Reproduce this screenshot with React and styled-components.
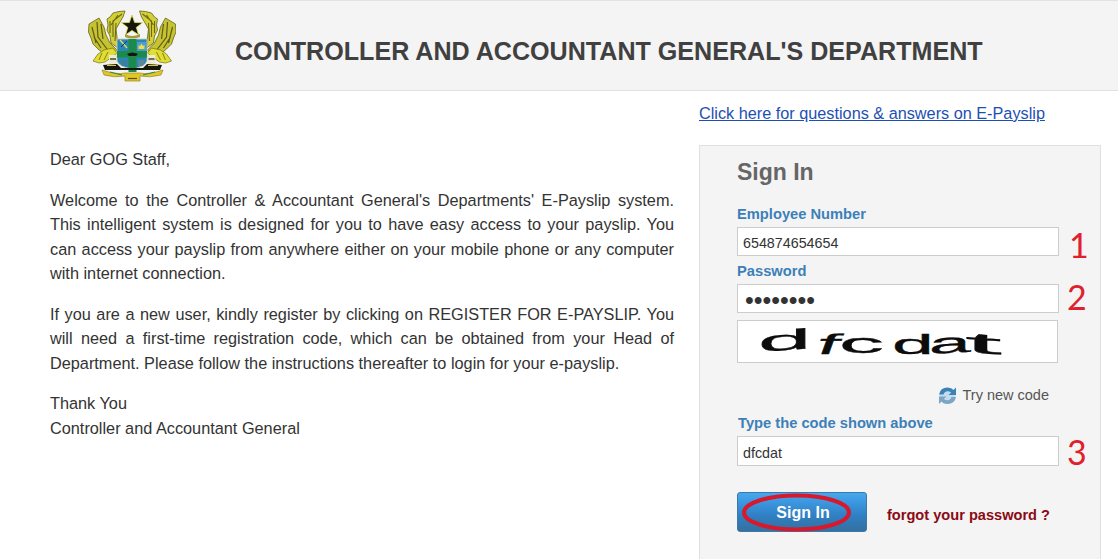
import React from 'react'
import styled, { createGlobalStyle } from 'styled-components'

const Global = createGlobalStyle`
  html, body { margin: 0; padding: 0; background: #fff; height: 559px; overflow: hidden; }
  body { font-family: "Liberation Sans", Arial, sans-serif; color: #333; }
  * { box-sizing: border-box; }
`;

const Page = styled.div`
  width: 1118px;
  height: 559px;
  overflow: hidden;
`;

const Header = styled.header`
  height: 91px;
  background: #f4f4f4;
  border-top: 1px solid #e2e2e2;
  border-bottom: 1px solid #e0e0e0;
  display: flex;
  align-items: center;
  padding-left: 88px;
`;

const Crest = styled.svg`
  width: 88px;
  height: 72px;
  flex: none;
`;

const HeaderTitle = styled.h1`
  margin: 12px 0 0 59px;
  font-size: 25.1px;
  font-weight: bold;
  color: #404040;
  white-space: nowrap;
`;

const Main = styled.main`
  display: flex;
  padding-left: 50px;
`;

const Letter = styled.section`
  width: 624px;
  padding-top: 56px;
  font-size: 16.3px;
  line-height: 24.5px;
  text-align: justify;
`;

const Para = styled.p`
  margin: 0 0 16px;
`;

const Side = styled.aside`
  margin-left: 25px;
  width: 402px;
  display: flex;
  flex-direction: column;
`;

const TopLink = styled.a`
  margin-top: 13px;
  height: 41px;
  font-size: 16.25px;
  line-height: 18px;
  color: #1d4fb3;
  text-decoration: underline;
`;

const Panel = styled.div`
  height: 420px;
  background: #f4f4f4;
  border: 1px solid #e0e0e0;
  padding: 0 0 0 37px;
`;

const PanelTitle = styled.h2`
  margin: 13px 0 21px;
  font-size: 23px;
  line-height: 26px;
  font-weight: bold;
  color: #666;
`;

const Label = styled.label`
  display: block;
  margin-left: ${(p) => p.$shift || 0}px;
  font-size: 14.7px;
  line-height: 16px;
  font-weight: bold;
  color: #3c80b8;
`;

const Row = styled.div`
  display: flex;
  align-items: center;
  margin-top: ${(p) => p.$top || 0}px;
  margin-bottom: ${(p) => p.$bottom || 0}px;
`;

const Field = styled.input`
  width: 322px;
  height: ${(p) => p.$height || 29}px;
  border: 1px solid #ccc;
  background: #fff;
  padding: ${(p) => p.$padTop ?? 3}px 5px 0 ${(p) => p.$padLeft || 5}px;
  font-family: "Liberation Sans", Arial, sans-serif;
  font-size: ${(p) => p.$size || 14.3}px;
  color: #333;
  outline: none;
`;

const Mark = styled.span`
  margin-left: ${(p) => p.$gap || 8}px;
  transform: translateY(${(p) => p.$drop || 0}px);
  font-family: Lato, "Open Sans", sans-serif;
  font-size: 34px;
  line-height: 29px;
  color: #e0202c;
`;

const Captcha = styled.div`
  width: 321px;
  height: 43px;
  margin-top: 7px;
  background: #fff;
  border: 1px solid #ccc;
  display: flex;
  align-items: baseline;
  padding: 0 0 0 20px;
  overflow: hidden;
`;

const CaptchaChar = styled.span`
  display: block;
  flex: none;
  width: ${(p) => p.$w}px;
  font-family: "Liberation Sans", Arial, sans-serif;
  font-size: 30px;
  line-height: 36px;
  color: #0c0c0c;
  -webkit-text-stroke: 0.3px #0c0c0c;
  transform-origin: left 75%;
  transform: ${(p) => p.$warp};
`;

const Refresh = styled.div`
  display: flex;
  align-items: center;
  justify-content: flex-end;
  width: 312px;
  height: 20px;
  margin-top: 22px;
  margin-bottom: 10px;
  font-size: 14.5px;
  color: #555;
  gap: 6px;
`;

const Actions = styled.div`
  display: flex;
  align-items: center;
  margin-top: 26px;
`;

const ButtonWrap = styled.div`
  position: relative;
  width: 130px;
  height: 40px;
`;

const SignInButton = styled.button`
  width: 130px;
  height: 40px;
  padding: 2px 0 0 2px;
  border: 1px solid #3f77a6;
  border-radius: 3px;
  background: linear-gradient(#45a8f0, #2f7fc4 60%, #34719f);
  color: #fff;
  font-family: "Liberation Sans", Arial, sans-serif;
  font-size: 16px;
  font-weight: bold;
`;

const Ring = styled.svg`
  position: absolute;
  left: 0;
  top: 0;
  width: 120px;
  height: 40px;
  pointer-events: none;
`;

const Forgot = styled.a`
  margin: 6px 0 0 20px;
  font-size: 14.6px;
  font-weight: bold;
  color: #8b0a14;
  text-decoration: none;
`;

const LeftEagle = () => (
  <g>
    <path d="M125 10 L119 10.5 L113 12 L110 16 L107 18 L108 24 L107 29 L110 35 L111 42 L118 47 L117 36 L116 28 L120 21 L123 16Z" fill="#d2cf38" stroke="#66621a" strokeWidth="0.8" />
    <path d="M122 13 L113 20 L113 36 M118 14 L111 24 M116 22 L115 40 M110 20 L110 32" stroke="#6c6818" strokeWidth="1.1" fill="none" />
    <path d="M99 17 L94 20 L89 23 L88.5 31 L91 37 L93 43 L98 48 L104 53 L112 55 L117 49 L110 42 L106 34 L104 26Z" fill="#c6c332" stroke="#66621a" strokeWidth="0.8" />
    <path d="M97 21 L98 36 L107 48 M92 26 L96 42 M101 23 L103 38 M94 36 L101 47" stroke="#5e5a14" strokeWidth="1.2" fill="none" />
    <path d="M113 47 L104 49 L98 53 L93 60 L99 62 L105 61 L112 56 L117 52Z" fill="#e1dd30" stroke="#76701a" strokeWidth="0.7" />
    <path d="M102 52 L99 59 M108 51 L104 59" stroke="#7c7716" strokeWidth="0.9" />
    <rect x="109" y="54" width="8" height="11" fill="#ecebd8" />
    <path d="M110 58 H116" stroke="#3a3a22" strokeWidth="1.4" />
  </g>
)

const CrestIcon = () => (
  <Crest viewBox="88 9 88 72">
    <defs>
      <filter id="soft" x="-5%" y="-5%" width="110%" height="110%">
        <feGaussianBlur stdDeviation="0.35" />
      </filter>
    </defs>
    <g filter="url(#soft)">
      <LeftEagle />
      <g transform="translate(264.5 0) scale(-1 1)">
        <LeftEagle />
      </g>
      <path d="M132 14 L134.6 21.5 L142.5 21.7 L136.3 26.4 L138.6 33.8 L132 29.4 L125.6 33.8 L127.8 26.4 L121.5 21.7 L129.4 21.5Z" fill="#15150e" stroke="#e0dc50" strokeWidth="0.8" />
      <path d="M125 33 Q132 37 140 33 L140 36 Q132 39 125 36Z" fill="#a89a3a" />
      <path d="M117 38 H147 V60 Q145 66 132 68 Q119 66 117 60Z" fill="#2c86b4" stroke="#c6ceb8" strokeWidth="0.9" />
      <path d="M120 39 L127 47" stroke="#dbe060" strokeWidth="1.3" />
      <path d="M121 46 L127 40" stroke="#1a3a50" strokeWidth="1" />
      <path d="M137 41 H146 V50 H137Z" fill="#4d9ccb" />
      <path d="M138.5 48 V44 L140 45 L141.5 42.5 L143 45 L144.5 44 V48Z" fill="#eedd50" />
      <path d="M128.5 38 H136.5 V50 H147 V56.5 H136.5 V71 H128.5 V56.5 H117 V50 H128.5Z" fill="#1c8a4c" />
      <path d="M127 53 Q132 50 138 53 L136 55 H129Z" fill="#151510" />
      <path d="M120 59 H127 V65 H122Z" fill="#3d7f9a" />
      <path d="M138 59 H145 L143 65 H138Z" fill="#5a8896" />
      <path d="M103 64 L117 63 L121 67 H143 L147 63 L162 64 L160 69 L105 69Z" fill="#17170f" />
      <path d="M107 64.5 H116 M148 64.5 H158" stroke="#d9c935" strokeWidth="1.2" />
      <path d="M102 69 Q117 74 125 72 H140 Q148 74 163 69 L161 74 Q150 77 140 75 L140 80 H125 L125 75 Q114 77 104 74Z" fill="#dfc72a" stroke="#8a7812" strokeWidth="0.6" />
      <path d="M110 71 L122 74 M143 74 L155 71" stroke="#2a8a4a" strokeWidth="1" />
      <path d="M128 77.5 H137" stroke="#5e5010" strokeWidth="1.2" />
    </g>
  </Crest>
)

const RefreshIcon = () => (
  <svg width="19" height="19" viewBox="0 0 19 19">
    <rect x="1.5" y="2" width="16" height="15.5" rx="6" fill="#c6dcec" />
    <path d="M1 8.5 Q2.5 1.5 9.5 1.5 Q13.5 1.5 15.5 4 L18 1.5 V9 H10.5 L13.2 6.6 Q11.5 5.2 9.5 5.2 Q6.8 5.2 5.5 8.5Z" fill="#3a83b6" />
    <path d="M18 11 Q16.5 18 9.5 18 Q5.5 18 3.5 15.5 L1 18 V10.5 H8.5 L5.8 13 Q7.5 14.3 9.5 14.3 Q12.2 14.3 13.5 11Z" fill="#7ba6c6" />
  </svg>
)

export default function App() {
  return (
    <Page>
      <Global />
      <Header>
        <CrestIcon />
        <HeaderTitle>CONTROLLER AND ACCOUNTANT GENERAL'S DEPARTMENT</HeaderTitle>
      </Header>
      <Main>
        <Letter>
          <Para>Dear GOG Staff,</Para>
          <Para>
            Welcome to the Controller &amp; Accountant General's Departments' E-Payslip system. This intelligent
            system is designed for you to have easy access to your payslip. You can access your payslip from
            anywhere either on your mobile phone or any computer with internet connection.
          </Para>
          <Para>
            If you are a new user, kindly register by clicking on REGISTER FOR E-PAYSLIP. You will need a
            first-time registration code, which can be obtained from your Head of Department. Please follow the
            instructions thereafter to login for your e-payslip.
          </Para>
          <Para>
            Thank You
            <br />
            Controller and Accountant General
          </Para>
        </Letter>
        <Side>
          <TopLink href="#">Click here for questions &amp; answers on E-Payslip</TopLink>
          <Panel>
            <PanelTitle>Sign In</PanelTitle>
            <Label>Employee Number</Label>
            <Row $top={5} $bottom={7}>
              <Field readOnly value="654874654654" />
              <Mark $gap={10} $drop={3}>1</Mark>
            </Row>
            <Label>Password</Label>
            <Row $top={5}>
              <Field readOnly type="password" value="12345678" $size={25} $padLeft={7} $padTop={4} />
              <Mark $drop={-2}>2</Mark>
            </Row>
            <Captcha>
              <CaptchaChar $w={57} $warp="translateY(3px) skewY(-4deg) scale(3.2, 0.95)">d</CaptchaChar>
              <CaptchaChar $w={24} $warp="translateY(5px) skewX(-20deg) scale(2.6, 0.95)">f</CaptchaChar>
              <CaptchaChar $w={53} $warp="translateY(4px) scale(3, 0.95)">c</CaptchaChar>
              <CaptchaChar $w={37} $warp="translateY(5px) scale(2.5, 0.95)">d</CaptchaChar>
              <CaptchaChar $w={36} $warp="translateY(5px) skewY(-3deg) scale(2.5, 0.95)">a</CaptchaChar>
              <CaptchaChar $w={40} $warp="translateY(3px) skewY(4deg) scale(4.4, 0.95)">t</CaptchaChar>
            </Captcha>
            <Refresh>
              <RefreshIcon />
              <span>Try new code</span>
            </Refresh>
            <Label $shift={1}>Type the code shown above</Label>
            <Row $top={5}>
              <Field readOnly value="dfcdat" $height={30} />
              <Mark>3</Mark>
            </Row>
            <Actions>
              <ButtonWrap>
                <SignInButton>Sign In</SignInButton>
                <Ring viewBox="0 0 120 40">
                  <ellipse cx="59.5" cy="20.5" rx="52.5" ry="17" fill="none" stroke="#d8182c" strokeWidth="4" />
                </Ring>
              </ButtonWrap>
              <Forgot href="#">forgot your password ?</Forgot>
            </Actions>
          </Panel>
        </Side>
      </Main>
    </Page>
  )
}
